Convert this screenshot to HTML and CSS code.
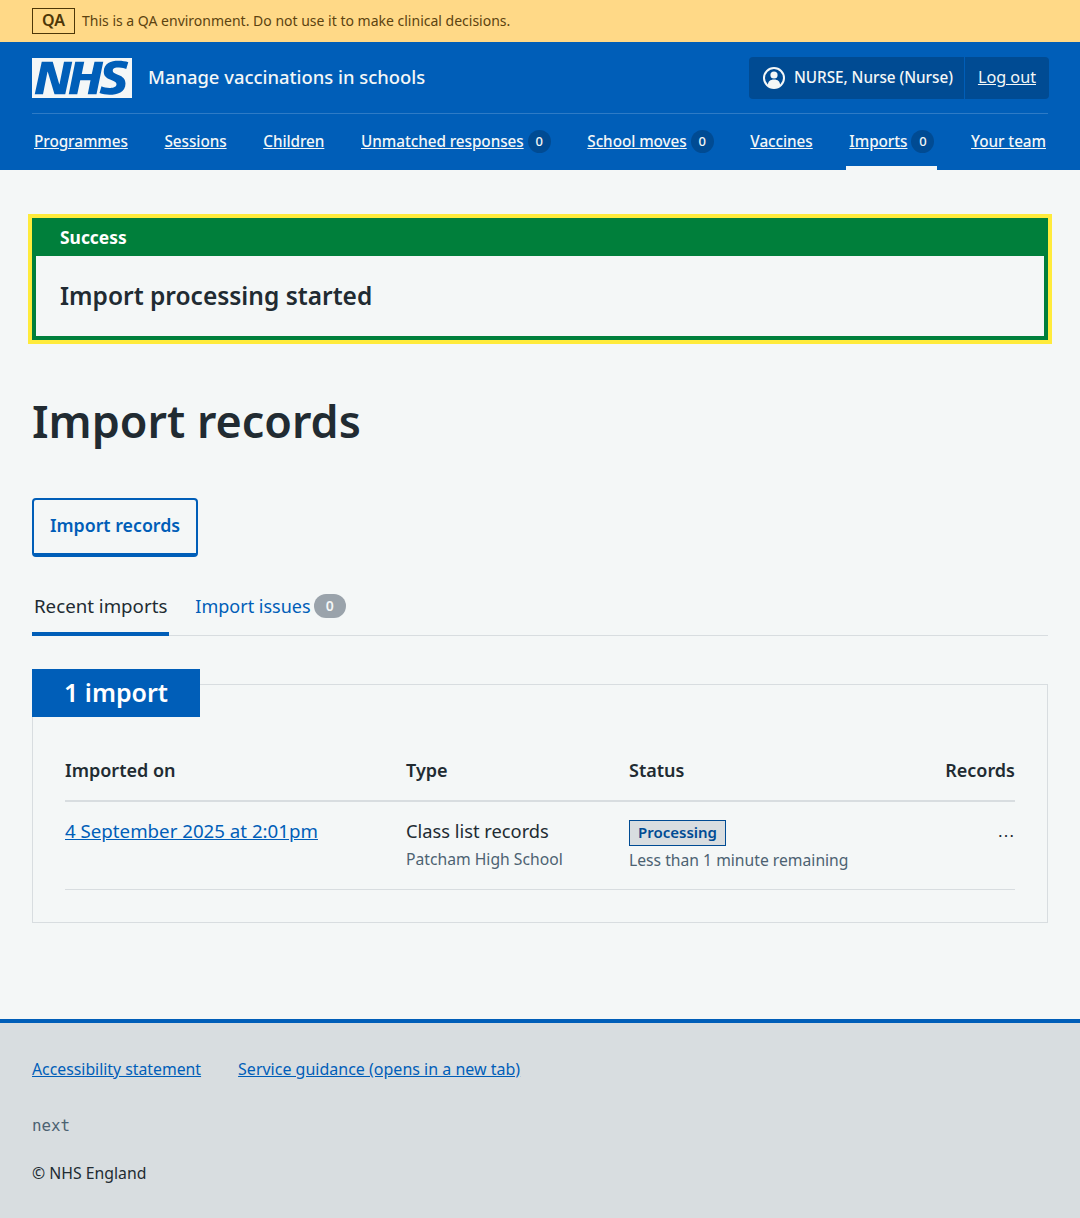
FILE: index.html
```html
<!DOCTYPE html>
<html lang="en">
<head>
<meta charset="utf-8">
<title>Import records</title>
<link rel="stylesheet" href="styles.css">
</head>
<body>
<div class="env"><strong class="env-tag">QA</strong><span>This is a QA environment. Do not use it to make clinical decisions.</span></div>
<header class="header">
  <div class="header-top">
    <a class="brand" href="#">
      <svg class="logo" viewBox="0 0 40 16" aria-label="NHS"><path fill="#f4f7f7" d="M0 0h40v16H0z"/><path fill="#005eb8" d="M3.9 1.5h4.4l2.6 9h.1l1.8-9h3.3l-2.8 13H9l-2.7-9h-.1l-1.8 9H1.1M17.3 1.5h3.6l-1 4.9h4L25 1.5h3.5l-2.7 13h-3.5l1.1-5.6h-4.1l-1.2 5.6h-3.4M37.7 4.4c-.7-.3-1.6-.6-2.9-.6-1.4 0-2.5.2-2.5 1.3 0 1.8 5.1 1.2 5.1 5.1 0 3.6-3.3 4.5-6.4 4.5-1.3 0-2.9-.3-4-.7l.8-2.7c.7.4 2.1.7 3.2.7s2.8-.2 2.8-1.5c0-2.1-5.1-1.3-5.1-5 0-3.4 2.9-4.4 5.8-4.4 1.6 0 3.1.2 4 .6"/></svg>
      <span class="service">Manage vaccinations in schools</span>
    </a>
    <div class="account">
      <span class="account-user">
        <svg class="user-icon" viewBox="0 0 24 24"><circle cx="12" cy="12" r="10" fill="none" stroke="#f4f7f7" stroke-width="2"/><circle cx="12" cy="9" r="3.6" fill="#f4f7f7"/><path fill="#f4f7f7" d="M5.8 19.4c0-4 2.4-6 6.2-6s6.2 2 6.2 6c-1.700 1.500-3.900 2.600-6.200 2.600s-4.500-1.100-6.200-2.600z"/></svg>
        <span class="account-name">NURSE, Nurse (Nurse)</span>
      </span>
      <a class="account-logout" href="#">Log out</a>
    </div>
  </div>
  <nav class="nav">
    <a class="nav-item" href="#"><span class="nav-link">Programmes</span></a>
    <a class="nav-item" href="#"><span class="nav-link">Sessions</span></a>
    <a class="nav-item" href="#"><span class="nav-link">Children</span></a>
    <a class="nav-item" href="#"><span class="nav-link">Unmatched responses</span><span class="nav-count">0</span></a>
    <a class="nav-item" href="#"><span class="nav-link">School moves</span><span class="nav-count">0</span></a>
    <a class="nav-item" href="#"><span class="nav-link">Vaccines</span></a>
    <a class="nav-item active" href="#"><span class="nav-link">Imports</span><span class="nav-count">0</span></a>
    <a class="nav-item" href="#"><span class="nav-link">Your team</span></a>
  </nav>
</header>
<main class="main">
  <div class="flash">
    <div class="flash-head">Success</div>
    <div class="flash-body">Import processing started</div>
  </div>
  <h1 class="title">Import records</h1>
  <a class="button" href="#">Import records</a>
  <div class="tabs">
    <span class="tab tab-current">Recent imports</span>
    <a class="tab tab-link" href="#">Import issues<span class="tab-count">0</span></a>
  </div>
  <section class="card">
    <h2 class="card-head">1 import</h2>
    <div class="table">
      <div class="row row-head">
        <div class="col-a">Imported on</div>
        <div class="col-b">Type</div>
        <div class="col-c">Status</div>
        <div class="col-d">Records</div>
      </div>
      <div class="row row-body">
        <div class="col-a"><a class="link" href="#">4 September 2025 at 2:01pm</a></div>
        <div class="col-b">Class list records<div class="hint">Patcham High School</div></div>
        <div class="col-c"><span class="tag">Processing</span><div class="hint">Less than 1 minute remaining</div></div>
        <div class="col-d ellipsis">…</div>
      </div>
    </div>
  </section>
</main>
<footer class="footer">
  <div class="footer-links"><a href="#">Accessibility statement</a><a class="footer-guidance" href="#">Service guidance (opens in a new tab)</a></div>
  <div class="footer-version">next</div>
  <div class="footer-copy">© NHS England</div>
</footer>
</body>
</html>
```
FILE: styles.css
```css
* { box-sizing: border-box; }
html, body { margin: 0; padding: 0; }
body {
  background: #f4f7f7;
  color: #212b32;
  font-family: "Noto Sans", Arial, sans-serif;
  font-size: 19px;
  line-height: 28px;
}
a { color: #005eb8; }

.env {
  height: 42px;
  background: #ffd987;
  color: #5c4310;
  padding: 8px 32px 0;
  display: flex;
  align-items: flex-start;
  gap: 8px;
  font-size: 14px;
  line-height: 26px;
}
.env-tag {
  border: 1px solid #4d3708;
  width: 43px;
  height: 26px;
  line-height: 23px;
  text-align: center;
  font-size: 16px;
  font-weight: 600;
  color: #4d3708;
}
.env span { margin-left: -1px; }
.header { background: #005eb8; height: 128px; padding: 0 32px; color: #f4f7f7; }
.header-top {
  height: 72px;
  display: flex;
  justify-content: space-between;
  align-items: flex-start;
  padding-top: 15px;
  border-bottom: 1px solid #2e7bc6;
}
.brand { display: flex; align-items: center; gap: 16px; color: #f4f7f7; text-decoration: none; padding-top: 1px; }
.logo { width: 100px; height: 40px; display: block; }
.service { font-size: 18.4px; font-weight: 500; margin-top: -2px; }
.account {
  display: flex;
  height: 42px;
  margin-right: -1px;
  background: #004b93;
  border-radius: 4px;
  align-items: stretch;
}
.account-user {
  display: flex;
  align-items: center;
  gap: 8px;
  padding: 0 11px 0 13px;
  font-size: 15.3px;
  letter-spacing: -0.04px;
  font-weight: 500;
  border-right: 1px solid #005eb8;
}
.account-name { margin-top: -2px; }
.user-icon { width: 24px; height: 24px; display: block; margin-top: -1px; }
.account-logout { color: #f4f7f7; padding: 0 13px; line-height: 40px; font-size: 16.2px; }
.nav { display: flex; justify-content: space-between; height: 56px; margin: 0 -1px; }
.nav-item {
  display: flex;
  align-items: flex-start;
  gap: 4px;
  padding: 13px 3px 0;
  color: #f4f7f7;
  text-decoration: none;
  font-size: 15.3px;
  letter-spacing: -0.06px;
  line-height: 28px;
  font-weight: 500;
}
.nav-link { text-decoration: underline; }
.nav-count {
  width: 23px;
  height: 23px;
  border-radius: 50%;
  background: #004b93;
  font-size: 13px;
  line-height: 23px;
  text-align: center;
  margin-top: 3px;
}
.active { box-shadow: inset 0 -4px 0 #f4f7f7; }

.main { padding: 48px 32px 96px; }
.flash {
  border: 4px solid #007f3b;
  outline: 4px solid #ffeb3b;
  background: #f4f7f7;
  height: 122px;
}
.flash-head {
  background: #007f3b;
  color: #fff;
  font-weight: 700;
  font-size: 17.4px;
  line-height: 30px;
  height: 34px;
  padding: 0 24px;
}
.flash-body {
  padding: 0 24px;
  font-size: 24.5px;
  line-height: 80px;
  font-weight: 600;
}
.title { margin: 49px 0 0; font-size: 44.9px; line-height: 64px; font-weight: 600; }
.button {
  display: block;
  width: 166px;
  height: 59px;
  margin-top: 45px;
  border: 2px solid #005eb8;
  border-bottom-width: 4px;
  border-radius: 4px;
  font-size: 17.8px;
  font-weight: 600;
  line-height: 51px;
  text-align: center;
  text-decoration: none;
}
.tabs { display: flex; gap: 24px; height: 79px; padding-top: 35px; box-shadow: inset 0 -1px 0 #d8dde0; font-size: 18px; }
.tab { padding: 0 2px; height: 44px; line-height: 28px; }
.tab-current { border-bottom: 4px solid #005eb8; font-size: 18.7px; }
.tab-link { text-decoration: none; display: flex; gap: 3px; align-items: flex-start; }
.tab-count {
  width: 32px; height: 24px; border-radius: 12px;
  margin-top: 2px;
  background: #9aa3ab;
  color: #f4f7f7;
  font-size: 14px;
  line-height: 24px;
  text-align: center;
  font-weight: 600;
}
.card {
  margin-top: 48px;
  border: 1px solid #d8dde0;
  height: 239px;
  padding: 0 32px;
  position: relative;
}
.card-head {
  position: absolute;
  top: -16px;
  left: -1px;
  margin: 0;
  width: 168px;
  height: 48px;
  background: #005eb8;
  color: #fff;
  font-size: 25px;
  font-weight: 600;
  line-height: 46px;
  text-align: center;
}
.table { padding-top: 67px; font-size: 18.3px; }
.row { display: flex; }
.row-head { height: 50px; border-bottom: 2px solid #d8dde0; font-size: 18px; font-weight: 600; line-height: 36px; }
.row-body { height: 88px; border-bottom: 1px solid #d8dde0; padding-top: 15px; }
.col-a { width: 341px; }
.col-b { width: 223px; }
.col-c { flex: 1; }
.col-d { width: 100px; text-align: right; }
.ellipsis { font-family: "Liberation Sans", sans-serif; font-size: 18px; }
.hint { font-size: 15.7px; line-height: 28px; color: #4c6272; }
.link { color: #005eb8; font-size: 18.7px; }
.tag {
  display: block;
  width: 97px;
  height: 26px;
  margin-top: 3px;
  background: #d8dde0;
  border: 1px solid #004b93;
  color: #004b93;
  font-size: 15px;
  font-weight: 600;
  line-height: 22px;
  text-align: center;
}
.footer {
  background: #d8dde0;
  border-top: 4px solid #005eb8;
  height: 199px;
  padding: 32px 32px 0;
  font-size: 15.8px;
}
.footer-links { display: flex; gap: 37px; line-height: 28px; }
.footer-guidance { font-size: 16px; }
.footer-version { font-family: "DejaVu Sans Mono", monospace; color: #4c6272; font-size: 15.8px; margin-top: 29px; }
.footer-copy { margin-top: 19px; }
```
